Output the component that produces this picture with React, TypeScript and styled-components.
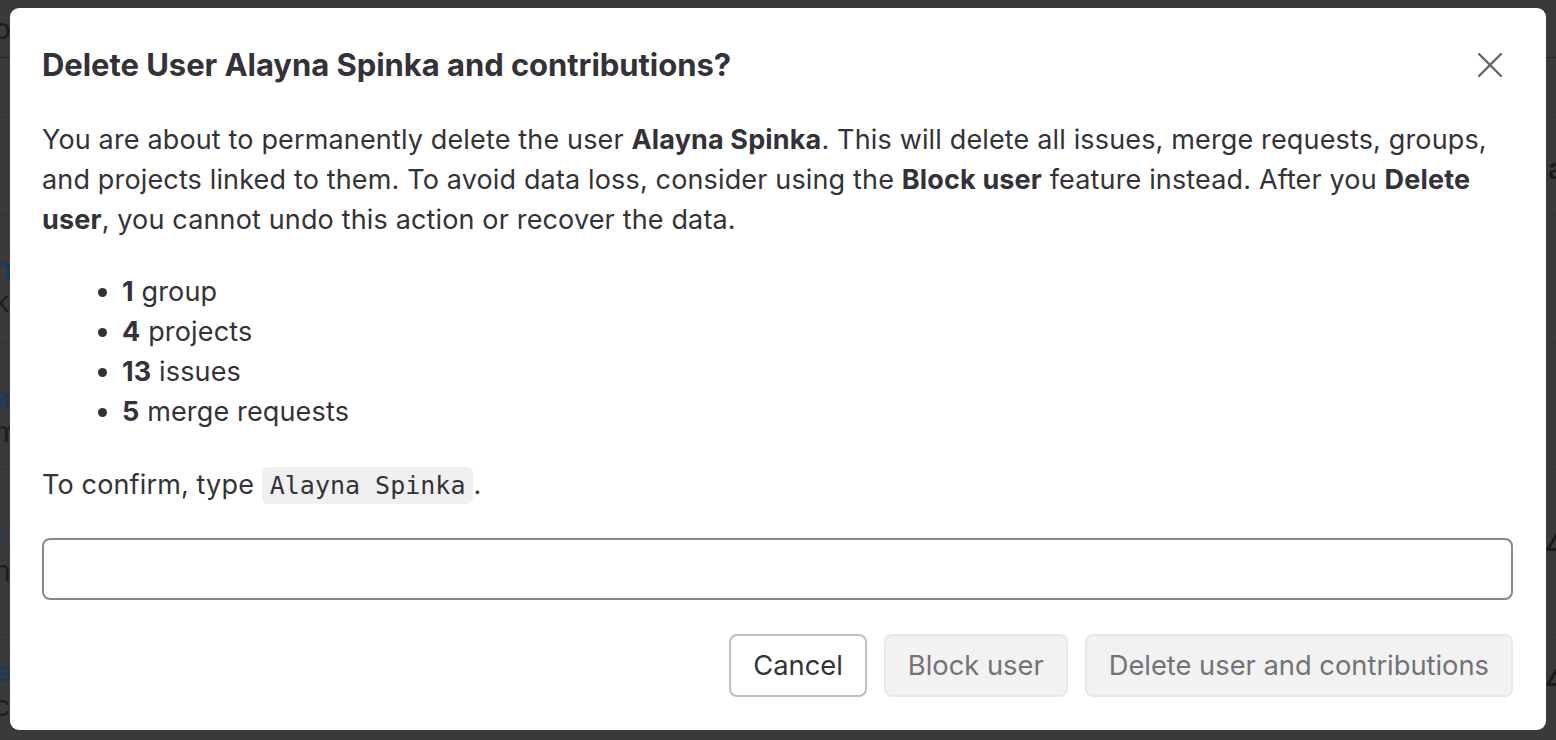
import React from "react";
import styled, { createGlobalStyle } from "styled-components";

const GlobalStyle = createGlobalStyle`
  html, body { margin: 0; padding: 0; }
  body {
    width: 1556px;
    height: 740px;
    overflow: hidden;
    background: #3a3a3a;
    font-family: Inter, "Noto Sans", "Liberation Sans", sans-serif;
  }
  * { box-sizing: border-box; }
`;

/* ---------- dimmed page behind the modal ---------- */
const Page = styled.div`
  width: 1556px;
  height: 740px;
  overflow: hidden;
  display: flex;
  flex-direction: column;
  background: #3a3a3a;
`;

const Row = styled.div<{ $h: number; $strong?: boolean }>`
  height: ${(p) => p.$h}px;
  flex: none;
  display: flex;
  justify-content: space-between;
  align-items: flex-start;
  border-bottom: 1px solid ${(p) => (p.$strong ? "#262626" : "#333333")};
  font-size: 28px;
  line-height: 34px;
`;

const LeftCell = styled.div<{ $top: number }>`
  margin-left: -6px;
  padding-top: ${(p) => p.$top}px;
  display: flex;
  flex-direction: column;
`;

const RightCell = styled.div<{ $top: number }>`
  margin-right: -8px;
  padding-top: ${(p) => p.$top}px;
  color: #1a1a1a;
  font-weight: 600;
`;

const Name = styled.span`
  color: #1c3a5e;
  font-weight: 600;
`;

const Sub = styled.span`
  color: #1c1c1c;
`;

/* ---------- modal ---------- */
const Backdrop = styled.div`
  position: fixed;
  inset: 0;
  display: flex;
  align-items: flex-start;
  justify-content: center;
  padding: 8px 10px 10px;
`;

const Modal = styled.div`
  width: 1536px;
  height: 722px;
  background: #ffffff;
  border-radius: 9px;
  display: flex;
  flex-direction: column;
  padding: 0 33px 33px 32px;
  color: #333238;
`;

const Header = styled.div`
  display: flex;
  align-items: center;
  justify-content: space-between;
  padding-top: 37px;
`;

const Title = styled.h2`
  margin: 0;
  font-size: 31px;
  line-height: 40px;
  font-weight: 700;
  color: #333238;
  letter-spacing: -0.05px;
`;

const CloseButton = styled.button`
  width: 36px;
  height: 36px;
  margin-right: 5px;
  border: none;
  background: transparent;
  padding: 0;
  display: flex;
  align-items: center;
  justify-content: center;
  color: #666666;
  cursor: pointer;
`;

const Body = styled.div`
  margin-top: 35px;
  font-size: 27px;
  line-height: 40px;
  letter-spacing: 0.15px;
  color: #333238;
`;

const Paragraph = styled.p`
  margin: 0;
`;

const List = styled.ul`
  margin: 32px 0 0;
  padding-left: 80px;
  list-style: disc;
`;

const Item = styled.li`
  line-height: 40px;
`;

const Confirm = styled.p`
  margin: 33px 0 0;
`;

const Code = styled.code`
  font-family: "DejaVu Sans Mono", "Liberation Mono", monospace;
  font-size: 25px;
  letter-spacing: 0;
  background: #f0f0f0;
  border-radius: 6px;
  padding: 4px 8px;
  color: #333238;
`;

const Input = styled.input`
  margin-top: 32px;
  width: 100%;
  height: 62px;
  flex: none;
  border: 2px solid #89888d;
  border-radius: 8px;
  outline: none;
  font-size: 27px;
  padding: 0 16px;
`;

const Footer = styled.div`
  margin-top: auto;
  display: flex;
  justify-content: flex-end;
  gap: 17px;
`;

const Button = styled.button<{ $disabled?: boolean }>`
  height: 63px;
  padding: 0 22px;
  font-family: inherit;
  font-size: 27.3px;
  border-radius: 8px;
  border: 2px solid ${(p) => (p.$disabled ? "#e8e8e8" : "#bfbfc3")};
  background: ${(p) => (p.$disabled ? "#f2f2f2" : "#ffffff")};
  color: ${(p) => (p.$disabled ? "#737278" : "#333238")};
  cursor: ${(p) => (p.$disabled ? "not-allowed" : "pointer")};
`;

const CloseIcon = () => (
  <svg width="24" height="24" viewBox="0 0 24 24" fill="none">
    <path d="M1 1 L23 23 M23 1 L1 23" stroke="currentColor" strokeWidth="2.4" strokeLinecap="round" />
  </svg>
);

export default function App() {
  return (
    <>
      <GlobalStyle />
      <Page>
        <Row $h={58} $strong>
          <LeftCell $top={12}>
            <Sub>o</Sub>
          </LeftCell>
          <RightCell $top={12}> </RightCell>
        </Row>
        <Row $h={60}>
          <LeftCell $top={0} />
        </Row>
        <Row $h={97}>
          <LeftCell $top={0} />
          <RightCell $top={34}>a</RightCell>
        </Row>
        <Row $h={128}>
          <LeftCell $top={36}>
            <Name>n</Name>
            <Sub>k</Sub>
          </LeftCell>
        </Row>
        <Row $h={127}>
          <LeftCell $top={38}>
            <Name>a</Name>
            <Sub>m</Sub>
          </LeftCell>
          <RightCell $top={24}>l</RightCell>
        </Row>
        <Row $h={165}>
          <LeftCell $top={50}>
            <Name>r</Name>
            <Sub>h</Sub>
          </LeftCell>
          <RightCell $top={58}>4</RightCell>
        </Row>
        <Row $h={120}>
          <LeftCell $top={20}>
            <Name>e</Name>
            <Sub>c</Sub>
          </LeftCell>
          <RightCell $top={28}>4</RightCell>
        </Row>
      </Page>

      <Backdrop>
        <Modal role="dialog" aria-modal="true">
          <Header>
            <Title>Delete User Alayna Spinka and contributions?</Title>
            <CloseButton aria-label="Close">
              <CloseIcon />
            </CloseButton>
          </Header>
          <Body>
            <Paragraph>
              You are about to permanently delete the user <strong>Alayna Spinka</strong>. This will
              delete all issues, merge requests, groups, and projects linked to them. To avoid data
              loss, consider using the <strong>Block user</strong> feature instead. After you{" "}
              <strong>Delete user</strong>, you cannot undo this action or recover the data.
            </Paragraph>
            <List>
              <Item>
                <strong>1</strong> group
              </Item>
              <Item>
                <strong>4</strong> projects
              </Item>
              <Item>
                <strong>13</strong> issues
              </Item>
              <Item>
                <strong>5</strong> merge requests
              </Item>
            </List>
            <Confirm>
              To confirm, type <Code>Alayna Spinka</Code>.
            </Confirm>
          </Body>
          <Input aria-label="Confirm name" />
          <Footer>
            <Button>Cancel</Button>
            <Button $disabled>Block user</Button>
            <Button $disabled>Delete user and contributions</Button>
          </Footer>
        </Modal>
      </Backdrop>
    </>
  );
}
